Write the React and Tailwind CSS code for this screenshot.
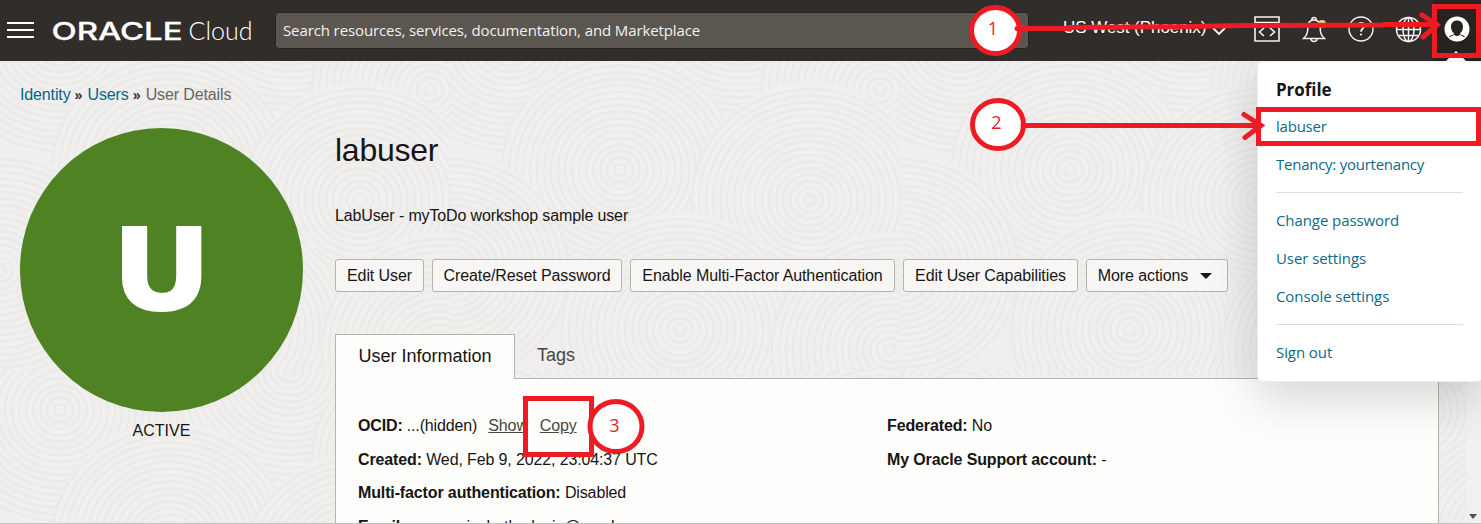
import React from 'react';

const RED = '#ee1b24';

const ringCenters = [[60, 40], [290, 0], [430, 90], [170, 170], [360, 200], [0, 270], [230, 330], [440, 350]];

function Texture() {
  return (
    <svg className="absolute inset-0 h-full w-full" aria-hidden="true">
      <defs>
        <pattern id="rings" width="450" height="370" patternUnits="userSpaceOnUse">
          <rect width="450" height="370" fill="#efeeec" />
          {ringCenters.map(([x, y]) => (
            <g key={x + '-' + y} fill="none" stroke="#ebeae8" strokeWidth="2.2">
              <circle cx={x} cy={y} r="118" fill="#f0efed" stroke="none" />
              {[6, 13, 20, 27, 34, 41, 48, 55, 62, 69, 76, 83, 90, 97, 104, 111, 118].map((q) => (
                <ellipse key={q} cx={x} cy={y} rx={q} ry={q * 0.94} />
              ))}
            </g>
          ))}
        </pattern>
      </defs>
      <rect width="100%" height="100%" fill="url(#rings)" />
    </svg>
  );
}

function Header() {
  return (
    <header className="relative flex h-[61px] w-full shrink-0 items-center bg-[#312d2a] pl-[7px] text-white">
      <div className="-mt-px flex h-4 w-[27px] flex-col justify-between">
        <span className="h-0.5 bg-white" />
        <span className="h-0.5 bg-white" />
        <span className="h-0.5 bg-white" />
      </div>
      <div className="ml-[14px] flex h-10 w-[208px] items-center">
        <svg width="208" height="40" viewBox="0 0 208 40" fill="#fff">
          <text x="3.500" y="28.500" fontFamily="Inter, sans-serif" fontWeight="500" fontSize="24.500" textLength="131" lengthAdjust="spacingAndGlyphs" stroke="#fff" strokeWidth="0.3">ORACLE</text>
          <text x="140.500" y="28.500" fontFamily="Lato, sans-serif" fontWeight="300" fontSize="26" textLength="64" lengthAdjust="spacingAndGlyphs">Cloud</text>
        </svg>
      </div>
      <div className="ml-[19px] flex h-[37px] w-[754px] items-center rounded border border-[#262320] bg-[#5b5650] pl-[7px] font-['Open_Sans',sans-serif] text-[15px] tracking-[-0.11px] text-[#f3f1ee]">
        Search resources, services, documentation, and Marketplace
      </div>
      <div className="ml-[34px] flex w-[163px] items-center justify-between font-['Liberation_Sans',sans-serif] text-[17px]">
        <span className="-mt-1.5 whitespace-nowrap tracking-[-0.05px]">US West (Phoenix)</span>
        <svg width="14" height="9" viewBox="0 0 14 9" fill="none" stroke="#fff" strokeWidth="1.8" className="mt-0.5"><path d="M1 1l6 6 6-6" /></svg>
      </div>
      <div className="-mt-[3px] ml-[28px] flex items-center gap-[21px] text-[#f5f4f2]">
        <svg width="26" height="26" viewBox="0 0 26 26" fill="none" stroke="currentColor" strokeWidth="1.600">
          <path d="M1 1h24v24H1zM1 6.500h24M10 12l-4.500 4 4.500 4M16 12l4.500 4-4.500 4" />
        </svg>
        <svg width="26" height="28" viewBox="0 0 26 28" fill="none" stroke="currentColor" strokeWidth="1.500">
          <path d="M2.500 23.500c3.500-3.500 4.300-5.500 4.300-11 0-4.500 2.200-7.500 6.200-7.500s6.200 3 6.200 7.500c0 5.500.8 7.500 4.300 11zM10.800 4.800a2.200 2.200 0 1 1 4.400 0M10 23.500a3 3 0 0 0 6 0" />
          <circle cx="21" cy="9" r="4" fill="#f2cf83" stroke="none" />
        </svg>
        <svg width="26" height="26" viewBox="0 0 26 26" fill="none" stroke="currentColor" strokeWidth="1.400">
          <circle cx="13" cy="13" r="12" />
          <path d="M9.900 9.800c0-4 6.400-4 6.400 0 0 2.400-3 2.500-3.200 6" strokeWidth="1.800" /><circle cx="13" cy="18.500" r="1.100" fill="currentColor" stroke="none" />
        </svg>
        <svg width="27" height="27" viewBox="0 0 27 27" fill="none" stroke="currentColor" strokeWidth="1.500">
          <circle cx="13.500" cy="13.500" r="12" /><ellipse cx="13.500" cy="13.500" rx="5.500" ry="12" />
          <path d="M13.500 1.500v24M1.500 13.500h24M3.500 7.500h20M3.500 19.500h20" />
        </svg>
      </div>
      <div className="absolute right-0 top-0 flex h-[61px] w-12 items-center justify-center bg-[#272320]">
        <svg width="26" height="26" viewBox="0 0 26 26" className="-mt-[3px] mr-px">
          <circle cx="13" cy="13" r="12.500" fill="#fff" />
          <path d="M13 4.500c-3.700 0-6 2.600-6 6.200 0 3 1.300 5.300 3 6.500v1c-2 .7-3.900 1.300-5 2.600a12 12 0 0 0 16 0c-1.100-1.300-3-1.900-5-2.600v-1c1.700-1.200 3-3.500 3-6.500 0-3.600-2.300-6.200-6-6.200z" fill="#272320" />
          <path d="M5 22.500c1.500-2.500 4-3.200 5.500-3.500 1.500 1.300 3.500 1.300 5 0 1.500.3 4 1 5.500 3.500-4 3.500-12 3.500-16 0z" fill="#fff" />
        </svg>
        <svg className="absolute bottom-0 left-[13px]" width="20" height="10" viewBox="0 0 20 10"><path d="M0 10L10 0l10 10z" fill="#fff" /></svg>
      </div>
    </header>
  );
}

function Button({ children, className }) {
  return (
    <button className={'flex h-[33px] shrink-0 items-center justify-center whitespace-nowrap rounded-[3px] border border-[#b7b3ae] bg-[#f7f6f4] text-base tracking-[-0.1px] ' + className}>
      {children}
    </button>
  );
}

function ProfileMenu() {
  const item = 'flex h-[38px] items-center';
  return (
    <aside className="absolute left-[1257px] top-[61px] z-20 flex h-[321px] w-[226px] flex-col rounded-md border border-[#eeedeb] bg-white pl-[18px] pr-[19px] pt-[11px] font-['Open_Sans',sans-serif] text-[15px] tracking-[-0.08px] text-[#0b6b8a] shadow-[0_16px_48px_rgba(0,0,0,0.16)]">
      <h2 className="flex h-[34px] items-center text-[17px] font-bold tracking-[-0.05px] text-[#161513]">Profile</h2>
      <a className={item + ' tracking-[-0.22px]'}>labuser</a>
      <a className={item + ' tracking-[-0.25px]'}>Tenancy: yourtenancy</a>
      <hr className="mb-[8px] mt-[9px] border-[#e0ddd7]" />
      <a className={item}>Change password</a>
      <a className={item}>User settings</a>
      <a className={item}>Console settings</a>
      <hr className="mb-[8px] mt-[9px] border-[#e0ddd7]" />
      <a className={item}>Sign out</a>
    </aside>
  );
}

function Marks() {
  return (
    <svg className="absolute inset-0 z-30" width="1481" height="524" fill="none" stroke={RED} strokeWidth="5">
      <rect x="1434.500" y="6.500" width="44" height="49" />
      <rect x="1258.500" y="109.500" width="220" height="34" />
      <rect x="525.500" y="398.500" width="66" height="56" />
      <g fill="#fff">
        <ellipse cx="995.500" cy="30.500" rx="24" ry="23" />
        <ellipse cx="998" cy="124.500" rx="25.500" ry="24" />
        <ellipse cx="616" cy="426.500" rx="26" ry="25" />
      </g>
      <g strokeLinecap="round">
        <path d="M1017 28.500h52M1069 27.500l120-1M1189 26.500l55-1M1244 25.500l140-.500M1384 24.500h53M1422 15l15 10-14 12" />
        <path d="M1023 125.500h237M1244 114.500l17 11-16 12" />
      </g>
      <g fill={RED} stroke="none" fontFamily="'Open Sans', sans-serif" fontSize="18" fontWeight="400" textAnchor="middle">
        <text x="993" y="35">1</text>
        <text x="996.500" y="129">2</text>
        <text x="614.500" y="432">3</text>
      </g>
    </svg>
  );
}

export default function App() {
  return (
    <div className="relative flex h-[524px] w-[1481px] flex-col overflow-hidden bg-[#efeeec] font-['Liberation_Sans',sans-serif] text-base text-[#161513]">
      <Texture />
      <Header />
      <div className="relative flex min-h-0 flex-1 justify-between">
        <main className="flex w-[1439px] flex-col pl-5 pt-[22px] tracking-[-0.13px]">
          <nav className="flex h-6 items-center text-[#00688c]">
            <a>Identity</a>
            <span className="mx-1 w-[9px] text-sm font-bold text-[#312d2a]">»</span>
            <a>Users</a>
            <span className="mx-1 w-[9px] text-sm font-bold text-[#312d2a]">»</span>
            <span className="text-[#6b6560]">User Details</span>
          </nav>
          <div className="flex min-h-0 flex-1">
            <div className="flex w-[283px] shrink-0 flex-col items-center pt-[21px]">
              <div className="flex h-[284px] w-[283px] items-center justify-center rounded-full bg-[#4f8222] font-['Open_Sans',sans-serif] text-[118px] font-extrabold leading-none text-white">
                <span className="-translate-y-1 scale-x-110">U</span>
              </div>
              <div className="mt-[7px] tracking-normal">ACTIVE</div>
            </div>
            <div className="ml-8 flex min-w-0 flex-1 flex-col">
              <h1 className="mt-[23px] text-[32px] leading-[40px] tracking-[-0.25px]">labuser</h1>
              <p className="mt-[34px] leading-6">LabUser - myToDo workshop sample user</p>
              <div className="mt-[31px] flex gap-2">
                <Button className="w-[89px]">Edit User</Button>
                <Button className="w-[190px]">Create/Reset Password</Button>
                <Button className="w-[265px]">Enable Multi-Factor Authentication</Button>
                <Button className="w-[175px]">Edit User Capabilities</Button>
                <Button className="w-[142px] gap-3 pr-1">
                  More actions
                  <svg width="12" height="6" viewBox="0 0 12 6"><path d="M0 0h12L6 6z" fill="#161513" /></svg>
                </Button>
              </div>
              <div className="mt-[42px] flex h-[45px] shrink-0 text-lg tracking-normal">
                <div className="flex w-[180px] items-center justify-center border border-b-0 border-[#b7b3ae] bg-[#fdfdfb] pb-0.5">User Information</div>
                <div className="flex flex-1 items-center border-b border-[#b7b3ae] pb-[3px] pl-[22px] text-[#4a4641]">Tags</div>
              </div>
              <section className="flex min-h-0 flex-1 border-x border-[#b7b3ae] bg-[#fdfdfb] pl-[22px] pt-[35px]">
                <div className="flex w-[529px] flex-col gap-[9.500px] whitespace-nowrap leading-6">
                  <div className="flex text-base"><b>OCID:</b><span className="ml-1">...(hidden)</span><a className="ml-[11px] text-[#4a4641] underline">Show</a><a className="ml-[12px] text-[#4a4641] underline">Copy</a></div>
                  <div><b>Created:</b> Wed, Feb 9, 2022, 23:04:37 UTC</div>
                  <div><b>Multi-factor authentication:</b> Disabled</div>
                  <div><b>Email:</b> anurseninshatherlania@oracle.com</div>
                </div>
                <div className="flex flex-col gap-[9.500px] leading-6">
                  <div><b>Federated:</b> No</div>
                  <div><b>My Oracle Support account:</b> -</div>
                </div>
              </section>
            </div>
          </div>
        </main>
        <div className="flex w-[15px] flex-col items-center justify-end bg-[#f0f0f0] pb-[5px] pr-px">
          <svg width="8" height="5" viewBox="0 0 8 5"><path d="M0 0h8L4 5z" fill="#505050" /></svg>
        </div>
        <div className="absolute inset-x-0 bottom-0 h-px bg-[#c3c2c1]" />
      </div>
      <ProfileMenu />
      <Marks />
    </div>
  );
}
